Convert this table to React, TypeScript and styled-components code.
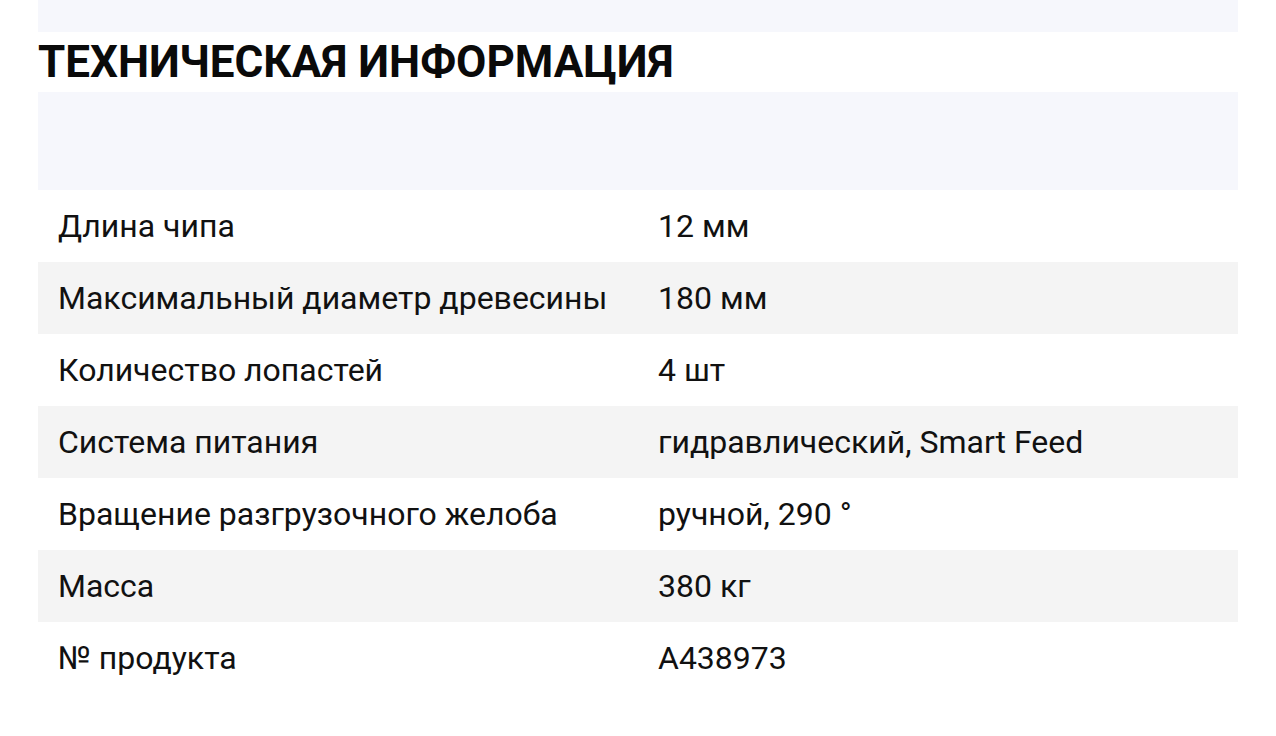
import React from 'react';
import styled, { createGlobalStyle } from 'styled-components';

const GlobalStyle = createGlobalStyle`
  html, body {
    margin: 0;
    padding: 0;
    background: #ffffff;
    font-family: Roboto, "Liberation Sans", sans-serif;
    color: #111111;
  }
`;

const Page = styled.div`
  display: flex;
  flex-direction: column;
  padding: 0 38px;
`;

const Band = styled.div<{ $h: number }>`
  height: ${(p) => p.$h}px;
  background: #f6f7fc;
`;

const Title = styled.h2`
  margin: 0;
  height: 60px;
  display: flex;
  align-items: center;
  font-size: 44px;
  font-weight: 700;
  color: #0a0a0a;
`;

const Table = styled.div`
  display: flex;
  flex-direction: column;
`;

const Row = styled.div<{ $alt: boolean }>`
  display: grid;
  grid-template-columns: 600px 1fr;
  height: 72px;
  align-items: center;
  padding-left: 20px;
  background: ${(p) => (p.$alt ? '#f4f4f4' : '#ffffff')};
  font-size: 32px;
  color: #111111;
`;

const Cell = styled.div`
  white-space: nowrap;
`;

const specs: [string, string][] = [
  ['Длина чипа', '12 мм'],
  ['Максимальный диаметр древесины', '180 мм'],
  ['Количество лопастей', '4 шт'],
  ['Система питания', 'гидравлический, Smart Feed'],
  ['Вращение разгрузочного желоба', 'ручной, 290 °'],
  ['Масса', '380 кг'],
  ['№ продукта', 'A438973'],
];

export default function App() {
  return (
    <>
      <GlobalStyle />
      <Page>
        <Band $h={32} />
        <Title>ТЕХНИЧЕСКАЯ ИНФОРМАЦИЯ</Title>
        <Band $h={98} />
        <Table>
          {specs.map(([k, v], i) => (
            <Row key={k} $alt={i % 2 === 1}>
              <Cell>{k}</Cell>
              <Cell>{v}</Cell>
            </Row>
          ))}
        </Table>
      </Page>
    </>
  );
}
